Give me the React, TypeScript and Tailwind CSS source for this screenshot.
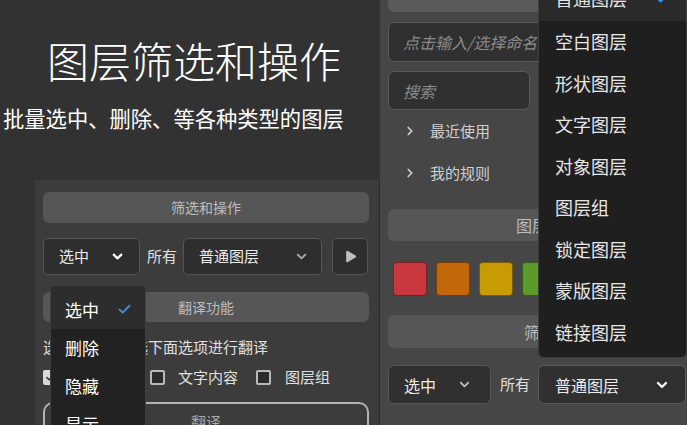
import { Check, ChevronDown, ChevronRight, Play } from 'lucide-react';

const leftMenu = ['删除', '隐藏', '显示'];
const rightMenu = ['空白图层', '形状图层', '文字图层', '对象图层', '图层组', '锁定图层', '蒙版图层', '链接图层'];
const swatches = ['#c9383f', '#c4660a', '#c89b05', '#5b9a2b', '#2f6fc0', '#7a4fb5', '#8a8a8a'];

function Bar({ label, className = '' }: { label: string; className?: string }) {
  return (
    <div className={`flex items-center justify-center rounded-[6px] bg-[#565656] text-[14px] text-[#bdbdbd] ${className}`}>
      {label}
    </div>
  );
}

function Checkbox({ checked = false }: { checked?: boolean }) {
  return (
    <span
      className={`flex h-[15px] w-[15px] shrink-0 items-center justify-center rounded-[2px] border-2 ${
        checked ? 'border-[#d8d8d8] bg-[#d8d8d8]' : 'border-[#b9b9b9] bg-[#2b2b2b]'
      }`}
    >
      {checked && <Check size={11} strokeWidth={3.5} className="text-[#333]" />}
    </span>
  );
}

export default function App() {
  return (
    <div className="flex h-[425px] w-[687px] overflow-hidden bg-[#323232] font-['Noto_Sans_CJK_SC','Noto_Sans',sans-serif]">
      {/* 左侧：标题 + 面板 */}
      <div className="flex w-[380px] shrink-0 flex-col">
        <div className="h-[180px] shrink-0">
          <h1 className="pl-[47px] pt-[39px] text-[42px] font-light leading-[42px] text-white">图层筛选和操作</h1>
          <p className="mt-[26px] pl-[3px] text-[21.3px] leading-[21px] text-white">批量选中、删除、等各种类型的图层</p>
        </div>

        <div className="relative ml-[35px] flex-1 border-r border-[#2a2a2a] bg-[#3c3c3c] pl-[8px] pr-[10px] pt-[12px]">
          <Bar label="筛选和操作" className="h-[31px]" />

          <div className="mt-[15px] flex h-[37px] items-center">
            <div className="flex h-full w-[97px] items-center justify-between rounded-[5px] border border-[#555] bg-[#2e2e2e] pl-[15px] pr-[14px] text-[15px] text-[#ececec]">
              选中
              <ChevronDown size={15} strokeWidth={3.5} className="text-white" />
            </div>
            <span className="ml-[7px] w-[30px] text-[15px] text-[#e0e0e0]">所有</span>
            <div className="ml-[6px] flex h-full w-[139px] items-center justify-between rounded-[5px] border border-[#555] bg-[#2e2e2e] pl-[15px] pr-[12px] text-[15px] text-[#ececec]">
              普通图层
              <ChevronDown size={15} strokeWidth={3} className="text-[#aaa]" />
            </div>
            <div className="ml-[10px] flex h-full w-[36px] items-center justify-center rounded-[5px] border border-[#555] bg-[#2e2e2e]">
              <Play size={15} fill="#bdbdbd" strokeWidth={0} />
            </div>
          </div>

          <Bar label="翻译功能" className="mt-[17px] h-[30px]" />

          <p className="mt-[16px] text-[15px] leading-[18px] text-[#e0e0e0]">选择图层，勾选下面选项进行翻译</p>

          <div className="mt-[12px] flex h-[18px] items-center text-[15px] text-[#e0e0e0]">
            <div className="flex w-[107px] items-center gap-[12px]">
              <Checkbox checked />
              图层名称
            </div>
            <div className="flex w-[106px] items-center gap-[13px]">
              <Checkbox />
              文字内容
            </div>
            <div className="flex items-center gap-[14px]">
              <Checkbox />
              图层组
            </div>
          </div>

          <div className="mt-[16px] flex h-[40px] items-center justify-center rounded-[10px] border-2 border-[#b3b3b3] text-[15px] text-[#aaa]">
            翻译
          </div>

          {/* 左侧下拉菜单 */}
          <div className="absolute left-[15px] top-[105px] h-[170px] w-[96px] overflow-hidden rounded-[4px] border border-[#3f3f3f] bg-[#222]">
            <div className="flex h-[43px] items-center bg-[#2d2d2d] pl-[14px] pt-[4px] text-[17px] text-white">
              选中
              <Check size={15} strokeWidth={3} className="ml-[18px] text-[#3b8beb]" />
            </div>
            {leftMenu.map((m) => (
              <div key={m} className="flex h-[38px] items-center pl-[14px] text-[17px] text-white">
                {m}
              </div>
            ))}
          </div>
        </div>
      </div>

      {/* 右侧面板 */}
      <div className="relative flex w-[368px] shrink-0 flex-col bg-[#464646] px-[8px]">
        <div className="-mt-[21px] h-[33px] shrink-0 rounded-[6px] bg-[#5a5a5a]" />

        <div className="mt-[10px] flex h-[40px] shrink-0 items-center rounded-[6px] border border-[#5a5a5a] bg-[#303030] pl-[14px] text-[16px] italic text-[#8a8a8a]">
          点击输入/选择命名规则
        </div>
        <div className="mt-[9px] flex h-[39px] w-[142px] shrink-0 items-center rounded-[6px] border border-[#5a5a5a] bg-[#303030] pl-[14px] text-[16px] italic text-[#8a8a8a]">
          搜索
        </div>

        {['最近使用', '我的规则'].map((r) => (
          <div key={r} className="flex h-[42px] shrink-0 items-center pl-[15px] text-[15px] text-[#cfcfcf]">
            <ChevronRight size={14} strokeWidth={3} className="text-[#cfcfcf]" />
            <span className="ml-[13px]">{r}</span>
          </div>
        ))}

        <Bar label="图层颜色标签" className="mt-[15px] h-[32px] shrink-0 bg-[#5a5a5a] text-[16px]" />

        <div className="mt-[21px] flex shrink-0 gap-[9px] pl-[5px]">
          {swatches.map((c) => (
            <div key={c} className="h-[34px] w-[34px] rounded-[4px] border border-[#00000066]" style={{ backgroundColor: c }} />
          ))}
        </div>

        <Bar label="筛选和操作" className="mt-[19px] h-[33px] shrink-0 bg-[#5a5a5a] text-[16px]" />

        <div className="mt-[17px] flex h-[39px] shrink-0 items-center">
          <div className="flex h-full w-[103px] items-center justify-between rounded-[6px] border border-[#555] bg-[#303030] pl-[15px] pr-[18px] text-[16px] text-[#ececec]">
            选中
            <ChevronDown size={15} strokeWidth={3} className="text-[#bbb]" />
          </div>
          <span className="ml-[9px] w-[30px] text-[15px] text-[#e0e0e0]">所有</span>
          <div className="ml-[8px] flex h-full w-[148px] items-center justify-between rounded-[6px] border border-[#5a5a5a] bg-[#303030] pl-[16px] pr-[15px] text-[16px] text-[#ececec]">
            普通图层
            <ChevronDown size={16} strokeWidth={3.5} className="text-white" />
          </div>
          <div className="ml-[10px] flex h-full w-[38px] items-center justify-center rounded-[6px] border border-[#555] bg-[#303030]">
            <Play size={15} fill="#bdbdbd" strokeWidth={0} />
          </div>
        </div>

        {/* 右侧下拉菜单 */}
        <div className="absolute left-[158px] top-[-26px] w-[149px] rounded-[6px] border border-[#3d3d3d] bg-[#1f1f1f] pb-[4px]">
          <div className="flex h-[46px] items-center justify-between bg-[#2a2a2a] pl-[16px] pr-[16px] text-[18px] text-[#e6e6e6]">
            普通图层
            <Check size={15} strokeWidth={3} className="text-[#3b8beb]" />
          </div>
          {rightMenu.map((m) => (
            <div key={m} className="flex h-[41.5px] items-center pl-[16px] text-[18px] text-[#e6e6e6]">
              {m}
            </div>
          ))}
        </div>
      </div>
    </div>
  );
}
